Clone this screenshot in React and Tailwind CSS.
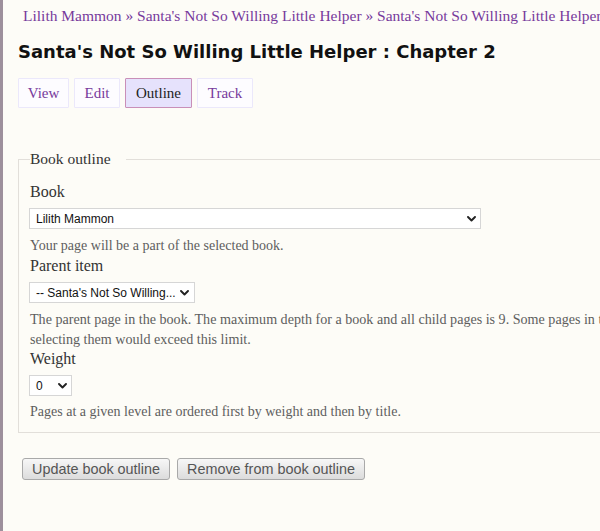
import React from "react";

const serif = { fontFamily: '"Liberation Serif", "Times New Roman", serif' };

function Chevron() {
  return (
    <svg width="9" height="6" viewBox="0 0 9 6" className="shrink-0">
      <path d="M1 1 L4.5 4.5 L8 1" fill="none" stroke="#222" strokeWidth="1.9" strokeLinecap="round" strokeLinejoin="round" />
    </svg>
  );
}

function FakeSelect({ value, width, chevronPad = "pr-[4px]" }) {
  return (
    <div
      className={`-ml-px mt-[6px] flex h-[21px] items-center justify-between border border-[#d6d6d6] bg-white pl-[6px] ${chevronPad} text-[12px] text-[#111]`}
      style={{ width, fontFamily: '"Liberation Sans", Arial, sans-serif' }}
    >
      <span className="whitespace-nowrap">{value}</span>
      <Chevron />
    </div>
  );
}

function Tab({ label, active, w }) {
  return (
    <div
      className={
        active
          ? "flex h-[30px] items-center justify-center border border-[#c98fb8] bg-[#e6e2fc] text-[15px] text-[#222] rounded-[1px]"
          : "flex h-[30px] items-center justify-center border border-[#ebe8fb] bg-[#fdfcff] text-[15px] text-[#773a9c] rounded-[1px]"
      }
      style={{ width: w }}
    >
      {label}
    </div>
  );
}

export default function App() {
  return (
    <div className="flex h-[531px] w-[600px] overflow-hidden bg-[#fdfcf7]" style={serif}>
      <div className="w-[3px] shrink-0 bg-[#9d909c]" />
      <div className="w-[1100px] shrink-0 pl-[15px]">
        <div className="pl-[5px] pt-[6px] text-[15.5px] leading-[20px] text-[#773a9c] whitespace-nowrap">
          Lilith Mammon » Santa's Not So Willing Little Helper » Santa's Not So Willing Little Helper : Chapter 2
        </div>
        <h1
          className="mt-[12px] text-[18px] font-bold leading-[28px] text-[#111] whitespace-nowrap"
          style={{ fontFamily: '"DejaVu Sans", Verdana, sans-serif' }}
        >
          Santa's Not So Willing Little Helper : Chapter 2
        </h1>
        <div className="mt-[12px] flex gap-[5px]">
          <Tab label="View" w="51px" />
          <Tab label="Edit" w="46px" />
          <Tab label="Outline" w="67px" active />
          <Tab label="Track" w="56px" />
        </div>

        <fieldset className="mt-[41px] w-[1000px] border border-[#e2dfda] px-[11px] pb-[10px]">
          <legend className="pr-[15px] text-[15.5px] leading-[20px] text-[#333]">Book outline</legend>
          <div className="pt-[13px]">
            <div className="text-[16px] leading-[20px] text-[#333]">Book</div>
            <FakeSelect value="Lilith Mammon" width="452px" />
            <div className="mt-[7px] text-[14px] leading-[20px] text-[#5e5e5e]">
              Your page will be a part of the selected book.
            </div>
            <div className="text-[16px] leading-[20px] text-[#333]">Parent item</div>
            <FakeSelect value="-- Santa's Not So Willing..." width="166px" chevronPad="pr-[5px]" />
            <div className="mt-[6px] text-[14.1px] leading-[20px] text-[#5e5e5e] whitespace-nowrap">
              The parent page in the book. The maximum depth for a book and all child pages is 9. Some pages in the selected book may not be available as parents if
              <br />
              selecting them would exceed this limit.
            </div>
            <div className="text-[16px] leading-[20px] text-[#333]">Weight</div>
            <FakeSelect value="0" width="43px" />
            <div className="mt-[6px] text-[14px] leading-[20px] text-[#5e5e5e]">
              Pages at a given level are ordered first by weight and then by title.
            </div>
          </div>
        </fieldset>

        <div
          className="ml-[4px] mt-[25px] flex gap-[7px]"
          style={{ fontFamily: '"Liberation Sans", Arial, sans-serif' }}
        >
          <button className="h-[22px] rounded-[3px] border border-[#a9a9a9] bg-gradient-to-b from-[#f7f7f7] to-[#dcdcdc] px-[9px] text-[14.4px] leading-[20px] text-[#555]">
            Update book outline
          </button>
          <button className="h-[22px] rounded-[3px] border border-[#a9a9a9] bg-gradient-to-b from-[#f7f7f7] to-[#dcdcdc] px-[9px] text-[14.4px] leading-[20px] text-[#555]">
            Remove from book outline
          </button>
        </div>
      </div>
    </div>
  );
}
